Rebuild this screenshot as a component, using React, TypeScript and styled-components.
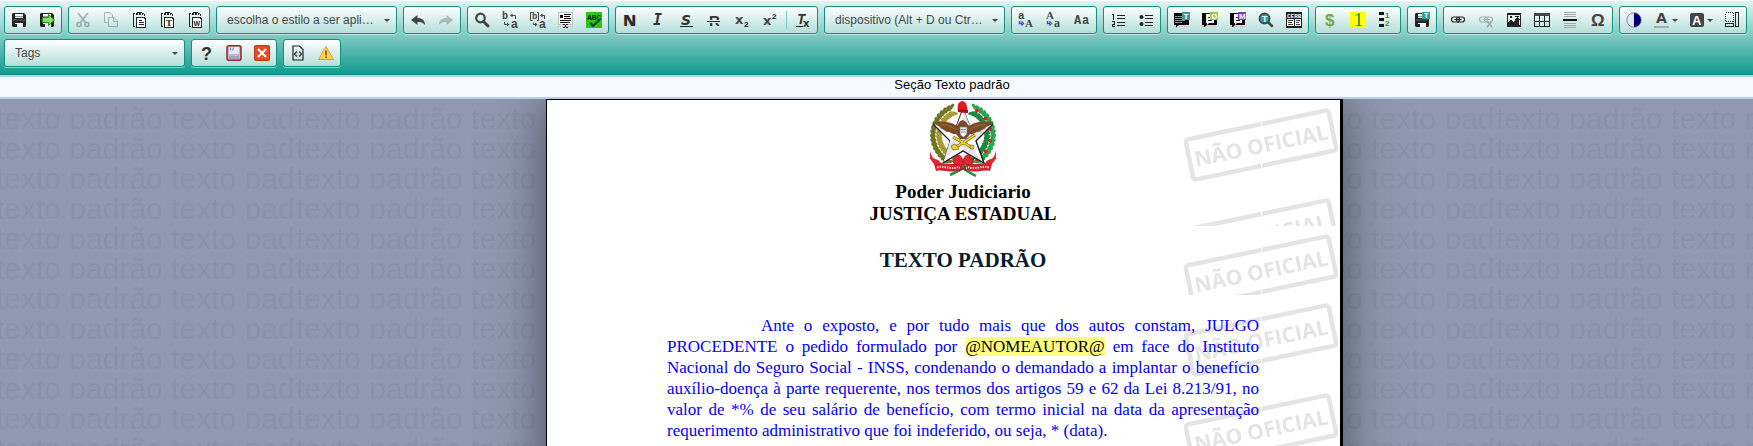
import React from 'react';
import styled, { createGlobalStyle } from 'styled-components';

const GlobalStyle = createGlobalStyle`
  * { box-sizing: border-box; }
  html, body, #root { height: 100%; margin: 0; }
  body { overflow: hidden; background: #9099af; font-family: "Liberation Sans", Arial, sans-serif; }
`;

const Editor = styled.div`
  display: flex;
  flex-direction: column;
  height: 100%;
`;

const Toolbar = styled.header`
  display: flex;
  flex-wrap: wrap;
  gap: 5px 6px;
  flex: none;
  padding: 5px 4px 7px;
  border-top: 1px solid #fff;
  border-bottom: 1px solid #0b8c80;
  background: linear-gradient(#e2f3f1, #109b8d);
`;

const Group = styled.div`
  display: flex;
  align-items: center;
  height: 28px;
  border: 1px solid #11907f;
  border-radius: 3px;
  background: linear-gradient(#fdfffe, #b5dfda);
  box-shadow: 0 1px 0 rgba(255, 255, 255, 0.5);
`;

const ToolButton = styled.button<{ $dim?: boolean }>`
  display: flex;
  align-items: center;
  gap: 2px;
  height: 26px;
  padding: 0 6px;
  border: 0;
  background: none;
  opacity: ${(p) => (p.$dim ? 0.3 : 1)};
  &:has(svg + svg) { padding-right: 5px; }
`;

const Separator = styled.span`
  width: 1px;
  height: 18px;
  margin: 0 2px;
  background: #7fc9c0;
`;

const ComboBox = styled(Group)`
  position: relative;
  width: 181px;
`;

const ComboSelect = styled.select`
  width: 100%;
  height: 26px;
  padding: 0 20px 0 10px;
  border: 0;
  appearance: none;
  background: none;
  color: #474747;
  font: 12px/26px "Liberation Sans", Arial, sans-serif;
`;

const ComboArrow = styled.span`
  position: absolute;
  right: 6px;
  top: 12px;
  display: flex;
  pointer-events: none;
`;

const SectionBar = styled.div`
  flex: none;
  height: 24px;
  padding-left: 151px;
  border: solid #b1cffa;
  border-width: 2px 0;
  background: #f6faff;
  text-align: center;
  font-size: 13px;
  line-height: 15px;
  color: #000;
`;

const Workspace = styled.main`
  position: relative;
  display: flex;
  justify-content: center;
  flex: 1;
  min-height: 0;
  padding-left: 136px;
  overflow: hidden;
  background: #9099af;
`;

const Backdrop = styled.svg`
  position: absolute;
  inset: 0;
  width: 100%;
  height: 100%;
`;

const Sheet = styled.article`
  position: relative;
  flex: none;
  width: 797px;
  min-height: 900px;
  border: solid #000;
  border-width: 1px 3px 0 1px;
  background: #fff;
  box-shadow: 0 0 50px rgba(0, 0, 0, 0.5);
  font-family: "Liberation Serif", "Times New Roman", serif;
  text-align: center;
`;

const Section = styled.section<{ $height: number }>`
  position: relative;
  min-height: ${(p) => p.$height}px;
  padding: 1px 81px 0 120px;
`;

const Content = styled.div`
  position: relative;
`;

const Crest = styled.svg`
  display: block;
  width: 70px;
  height: 77px;
  margin: 0 auto 3px;
`;

const Court = styled.p`
  margin: 0;
  font-size: 19px;
  font-weight: bold;
  line-height: 22px;
`;

const Title = styled.h1`
  margin: 0;
  padding-top: 20px;
  font-size: 21px;
  line-height: 26px;
  color: #05202a;
`;

const Paragraph = styled.p`
  margin: 0;
  padding-top: 19px;
  text-align: justify;
  text-indent: 94px;
  font-size: 17px;
  line-height: 21px;
  color: #0000ff;
`;

const Variable = styled.span`
  background: #ffff80;
  color: #000;
`;

const K = '#222';
const G = '#444';

const Icon = ({ children, crisp }: { children: React.ReactNode; crisp?: boolean }) => (
  <svg
    width="16"
    height="16"
    viewBox="0 0 16 16"
    fill="none"
    overflow="visible"
    aria-hidden="true"
    shapeRendering={crisp ? 'crispEdges' : undefined}
  >
    {children}
  </svg>
);

type GlyphProps = { x: number; y: number; s: number; c?: string; f?: string; w?: number; i?: boolean; children: React.ReactNode };
const Glyph = ({ x, y, s, c = G, f = 'Liberation Sans', w = 700, i, children }: GlyphProps) => (
  <text x={x} y={y} fontSize={s} fill={c} fontFamily={`"${f}", sans-serif`} fontWeight={w} fontStyle={i ? 'italic' : 'normal'}>
    {children}
  </text>
);

const Arrow = () => (
  <svg width="6" height="3" viewBox="0 0 6 3" aria-hidden="true">
    <path d="M0 0H6L3 3Z" fill="#474747" />
  </svg>
);

const Floppy = () => (
  <>
    <path d="M2 1H13L15 3V14L14 15H2L1 14V2Z" fill={K} />
    <path d="M4 2H12V6H4Z" fill="#eef8f6" />
    <path d="M4 4.5H12" stroke="#999" />
    <path d="M2 8H14" stroke="#777" strokeWidth=".8" />
    <path d="M4 11H12V15H4Z" fill="#eef8f6" />
    <path d="M4 12H6V15H4Z" fill={K} />
  </>
);

const Clipboard = ({ children }: { children: React.ReactNode }) => (
  <Icon crisp>
    <path d="M4 14.5H3L2.500 14V2.500L3 1.500H4M12 1.500L13.500 2.500V4" stroke={K} />
    <path d="M6 .5H11" stroke={K} />
    <path d="M5 2H12" stroke={K} strokeWidth="2" strokeDasharray="2 1" />
    <path d="M5.500 5.500H13L14.500 7V15.500H5.500Z" stroke={K} fill="#f8fffd" />
    {children}
  </Icon>
);

const ReplaceArrows = () => (
  <>
    <path d="M10 3.500H13.500V7" stroke={G} />
    <path d="M8 3.500L10.500 1.500V5.500Z" fill={G} />
    <path d="M2.500 10V12.500H5" stroke={G} />
    <path d="M7.500 12.500L5 10.500V14.500Z" fill={G} />
  </>
);

const CaseArrow = () => (
  <path d="M1.500 9V11.500H4M3.500 9.500L5.500 11.500L3.500 13.500" stroke="#2f50c8" strokeWidth="1.400" />
);

const Speech = ({ letter, color, full }: { letter: string; color: string; full?: boolean }) => (
  <Icon>
    <path d="M0 14.500H15" stroke="#e6b4cf" strokeWidth="1.500" strokeDasharray="1.500 1" />
    <path d="M0 1H15V13H5L2 15.500V13H0Z" fill="#080808" />
    {full ? (
      <path d="M1 4.500H9M1 6.500H9M1 8.500H11M1 10.500H8" stroke="#8a8a8a" />
    ) : (
      <>
        <path d="M4 2H12V11H7L5 13V11H4Z" fill="#f4faf9" />
        <path d="M6 5.500H9M6 8.500H10" stroke={K} />
      </>
    )}
    <path d="M8 0H16V8H8Z" fill={color} />
    <Glyph x={letter === 'M' ? 9 : 9.500} y={7} s={8} c="#fff">{letter}</Glyph>
  </Icon>
);

const Chain = () => (
  <>
    <rect x="1.500" y="5" width="8" height="5" rx="2.500" stroke={K} strokeWidth="1.200" />
    <rect x="6.500" y="5" width="8" height="5" rx="2.500" stroke={K} strokeWidth="1.200" />
    <path d="M4.500 7.500H11.500" stroke={K} />
  </>
);

const NumberedLines = () => <path d="M7 3.500H15M7 6.500H15M7 10.500H15M7 13.500H15" stroke={K} />;

const icons: Record<string, React.ReactNode> = {
  save: <Icon><Floppy /></Icon>,
  saveAs: (
    <Icon>
      <Floppy />
      <path d="M3.500 5.500H9.500V2.500L15.500 8L9.500 13.500V10.500H3.500Z" fill="#86e06c" stroke="#2c8a1d" />
    </Icon>
  ),
  cut: (
    <Icon>
      <path d="M3 1L11 11M13 1L5 11" stroke={K} strokeWidth="2" />
      <circle cx="4" cy="12.500" r="2" stroke={K} strokeWidth="1.600" />
      <circle cx="12" cy="12.500" r="2" stroke={K} strokeWidth="1.600" />
    </Icon>
  ),
  copy: (
    <Icon>
      <path d="M5 10.500H1.500V.5H7L9.500 3V5" stroke={K} />
      <path d="M5.500 5.500H11L14.500 9V14.500H5.500Z" stroke={K} />
      <path d="M10.500 5.500V9.500H14" stroke={K} />
    </Icon>
  ),
  paste: <Clipboard><path d="M8 8.500H11M8 10.500H13M8 12.500H13" stroke={K} /></Clipboard>,
  pasteText: <Clipboard><Glyph x={7} y={14} s={9} c={K} f="Liberation Serif">T</Glyph></Clipboard>,
  pasteWord: <Clipboard><Glyph x={6.500} y={14} s={7} c={K}>W</Glyph></Clipboard>,
  undo: <Icon><path d="M1 8L7.500 3V6C12 6 15 8.500 15 13C13 10.500 11 10 7.500 10V13Z" fill={G} /></Icon>,
  redo: <Icon><path d="M15 8L8.500 3V6C4 6 1 8.500 1 13C3 10.500 5 10 8.500 10V13Z" fill={G} /></Icon>,
  find: (
    <Icon>
      <circle cx="6.500" cy="6" r="4.300" stroke={G} strokeWidth="2.200" />
      <path d="M9.500 9.500L14 14" stroke={G} strokeWidth="3" strokeLinecap="round" />
    </Icon>
  ),
  replace: <Icon><Glyph x={0} y={7} s={10} f="Liberation Mono">b</Glyph><Glyph x={9} y={16} s={12}>a</Glyph><ReplaceArrows /></Icon>,
  replaceAll: (
    <Icon>
      <Glyph x={2} y={7} s={9} f="Liberation Mono">b</Glyph>
      <path d="M2.500 .5H.5V8.500H2.500M7 .5H8.500V8.500H7" stroke={G} />
      <path d="M12 3.500H14.500V7" stroke={G} />
      <path d="M10 3.500L12.500 1.500V5.500Z" fill={G} />
      <path d="M3.500 10.500V12.500H5" stroke={G} />
      <path d="M7.500 12.500L5 10.500V14.500Z" fill={G} />
      <Glyph x={9} y={16} s={12}>a</Glyph>
    </Icon>
  ),
  selectAll: (
    <Icon crisp>
      <path d="M0 0H15V13H0Z" fill="#c2c2c2" />
      <path d="M1 1H14V12H1Z" fill="#f1f5f4" />
      <path d="M2 3H5V6H2ZM6 2H13V3H6ZM6 4H12V5H6ZM6 6H13V7H6ZM2 8H13V9H2ZM2 10H12V11H2Z" fill="#111" />
      <path d="M0 14.500H15" stroke="#bbb" strokeDasharray="1 1" />
      <path d="M5 12.500H7M8 12.500H10M7.500 13V15M5 15.500H7M8 15.500H10" stroke="#111" />
    </Icon>
  ),
  spell: (
    <Icon>
      <path d="M0 0H16V16H0Z" fill="#2dc614" />
      <Glyph x={1} y={8} s={8} c="#061a06" f="Liberation Mono">ABC</Glyph>
      <path d="M4.500 11L7 14L13.500 8" stroke="#12384a" strokeWidth="2.200" />
    </Icon>
  ),
  bold: <Icon><Glyph x={1} y={14} s={16} c="#2b2b2b" f="Open Sans" w={800}>N</Glyph></Icon>,
  italic: <Icon><Glyph x={3} y={13} s={15} c="#333" f="DejaVu Sans Mono" i>I</Glyph></Icon>,
  underline: <Icon><Glyph x={3} y={13} s={14} c="#333" f="DejaVu Sans" i>S</Glyph><path d="M2 14.500H15" stroke={K} /></Icon>,
  strike: <Icon><Glyph x={3} y={14} s={15} c="#333">R</Glyph><path d="M1 9.500H14" stroke="#eaf6f4" strokeWidth="3" /><path d="M1 9.500H14" stroke={K} /></Icon>,
  sub: <Icon><Glyph x={1} y={12} s={13} f="DejaVu Sans">x</Glyph><Glyph x={10} y={15} s={8} c={K}>2</Glyph></Icon>,
  sup: <Icon><Glyph x={1} y={13} s={13} f="DejaVu Sans">x</Glyph><Glyph x={10} y={7} s={8} c={K}>2</Glyph></Icon>,
  removeFormat: (
    <Icon>
      <Glyph x={2} y={12} s={14} c="#333" f="Liberation Mono" i>T</Glyph>
      <path d="M1 14.500H8" stroke={K} />
      <Glyph x={8} y={15} s={10} c="#333" f="DejaVu Sans">x</Glyph>
    </Icon>
  ),
  upper: <Icon><Glyph x={0} y={7} s={11} f="Liberation Mono">a</Glyph><Glyph x={7} y={15} s={11} f="Liberation Serif">A</Glyph><CaseArrow /></Icon>,
  lower: <Icon><Glyph x={0} y={7} s={11} f="Liberation Serif">A</Glyph><Glyph x={8} y={15} s={12} f="Liberation Serif">a</Glyph><CaseArrow /></Icon>,
  capitalize: <Icon><Glyph x={0} y={12} s={12} f="Liberation Mono">A</Glyph><Glyph x={8} y={12} s={12} f="Liberation Mono">a</Glyph></Icon>,
  ordered: (
    <Icon crisp>
      <NumberedLines />
      <path d="M2 2.500H3.500V8M2 9.500H4.500V12.500H2.500V14.500H5" stroke={K} />
    </Icon>
  ),
  bullets: <Icon><NumberedLines /><circle cx="3.500" cy="5" r="2" fill={K} /><circle cx="3.500" cy="12" r="2" fill={K} /></Icon>,
  noteT: <Speech letter="T" color="#2e9fa6" full />,
  noteD: <Speech letter="D" color="#9ccb34" />,
  noteM: <Speech letter="M" color="#8438cf" />,
  findT: (
    <Icon>
      <path d="M10 10L14 14" stroke={G} strokeWidth="2.500" strokeLinecap="round" />
      <circle cx="6.500" cy="6.500" r="5" fill="#2e9fa6" stroke={G} strokeWidth="1.800" />
      <Glyph x={4} y={10} s={9} c="#d8ffff">T</Glyph>
    </Icon>
  ),
  cerb: (
    <Icon crisp>
      <path d="M0 0H16V15.500H0Z" fill="#1c1c1c" />
      <Glyph x={1} y={6} s={6} c="#fff" f="Liberation Mono">CERB</Glyph>
      <path d="M1 7H8V14H1ZM9 7H15V14H9Z" fill="#f3faf9" />
      <path d="M2 8.500H7M2 10.500H6M2 12.500H7M10 8.500H14M10 10.500H13M10 12.500H14" stroke="#444" />
    </Icon>
  ),
  money: <Icon><Glyph x={3} y={14} s={17} c="#7ba443">$</Glyph></Icon>,
  number: <Icon><path d="M0 0H16V16H0Z" fill="#ff0" /><Glyph x={4} y={14} s={18} c="#168a16" f="Liberation Serif" w={400}>1</Glyph></Icon>,
  levels: (
    <Icon>
      <path d="M1 0H6V3H1ZM1 6H6V9H1ZM1 12H6V15H1Z" fill="#111" />
      <Glyph x={7} y={6} s={8} c="#3b8f1a">1</Glyph>
      <Glyph x={7} y={14} s={8} c="#3b8f1a">2</Glyph>
    </Icon>
  ),
  saveT: (
    <Icon>
      <Floppy />
      <path d="M8 0H16V7H8Z" fill="#2e9fa6" />
      <Glyph x={10} y={6} s={7} c="#fff">T</Glyph>
    </Icon>
  ),
  link: <Icon><Chain /></Icon>,
  unlink: <Icon><Chain /><path d="M9 9L14 15M14 9L9 15" stroke={K} strokeWidth="1.500" /></Icon>,
  image: (
    <Icon crisp>
      <path d="M1 1H15V15H1Z" fill={K} />
      <path d="M2 3H14V13H2Z" fill="#e2efed" />
      <path d="M2 13V10L5 8L8 10L9 8H8L11 5L14 8H13V13Z" fill={K} />
      <path d="M4 4H6V6H4ZM9 4H13V5H9Z" fill={K} />
    </Icon>
  ),
  table: (
    <Icon crisp>
      <path d="M0 1H16V4H0Z" fill={G} />
      <path d="M.5 4V14.500H15.500V4M.5 9.500H15.500M5.500 4V14M10.500 4V14" stroke={K} />
    </Icon>
  ),
  rule: (
    <Icon crisp>
      <path d="M2 .5H14M2 2.500H14M2 4.500H14M2 11.500H14M2 13.500H14M2 15.500H14" stroke="#9aa8a6" />
      <path d="M1 7H15V9H1Z" fill="#111" />
    </Icon>
  ),
  omega: <Icon><Glyph x={1} y={14} s={17} f="Liberation Sans">Ω</Glyph></Icon>,
  contrast: (
    <Icon>
      <circle cx="8" cy="8" r="7.200" fill="#e4e4ec" stroke="#8c8ca0" />
      <path d="M8 1A7 7 0 0 1 8 15Z" fill="#00007c" />
    </Icon>
  ),
  textColor: <Icon><Glyph x={2} y={11} s={14} f="DejaVu Sans">A</Glyph><path d="M0 15H15" stroke="#9aa09f" strokeWidth="1.600" /></Icon>,
  bgColor: (
    <Icon>
      <rect x="1" y="1" width="14" height="14" rx="2" fill={G} />
      <Glyph x={3} y={13} s={13} c="#fff">A</Glyph>
    </Icon>
  ),
  blocks: (
    <Icon crisp>
      <path d="M1.500 .5H9.500V9.500H1.500Z" stroke={K} strokeDasharray="1 1" />
      <rect x="1.500" y="11.500" width="8" height="3" rx="1" stroke={K} />
      <rect x="11.500" y=".5" width="3" height="14" rx="1" stroke={K} />
    </Icon>
  ),
  about: <Icon><Glyph x={3} y={15} s={18} c="#333">?</Glyph></Icon>,
  autosave: (
    <Icon>
      <rect x="1" y=".8" width="14" height="14.400" rx="2" fill="#b9bcd2" stroke="#a1272f" strokeWidth="1.600" />
      <path d="M3 2H13V9H3Z" fill="#e8eaf4" />
      <path d="M4.500 2.500V5.500M6.500 5.500L7.500 2.500" stroke="#7274a6" />
      <path d="M3 11H13V14H3Z" fill="#a3a6c2" />
    </Icon>
  ),
  close: (
    <Icon>
      <rect x=".5" y=".5" width="15" height="15" rx="1.500" fill="#ea4a23" stroke="#c33413" />
      <path d="M4 4L12 12M12 4L4 12" stroke="#fff" strokeWidth="2" />
    </Icon>
  ),
  source: (
    <Icon>
      <path d="M3 1H9.500L13 4.500V15H3Z" stroke={K} strokeWidth="1.200" />
      <path d="M7 6.500L4.500 9L7 11.500M9 6.500L11.500 9L9 11.500" stroke={G} strokeWidth="1.600" />
    </Icon>
  ),
  warning: (
    <Icon>
      <path d="M8 1.500L15.500 14.500H.5Z" fill="#fbd34f" stroke="#dca02c" strokeLinejoin="round" />
      <path d="M8 5.500V10.500M8 11.500V13" stroke="#8a4c0a" strokeWidth="1.600" />
    </Icon>
  ),
};

type Item = { icon: string; label: string; dim?: boolean; menu?: boolean; sepBefore?: boolean };
type Entry = Item[] | { combo: string; label: string };
const t = (icon: string, label: string, extra: Partial<Item> = {}): Item => ({ icon, label, ...extra });

const entries: Entry[] = [
  [t('save', 'Salvar'), t('saveAs', 'Salvar e fechar')],
  [
    t('cut', 'Recortar', { dim: true }), t('copy', 'Copiar', { dim: true }), t('paste', 'Colar'),
    t('pasteText', 'Colar como texto'), t('pasteWord', 'Colar do Word'),
  ],
  { combo: 'escolha o estilo a ser apli…', label: 'Estilo' },
  [t('undo', 'Desfazer'), t('redo', 'Refazer', { dim: true })],
  [
    t('find', 'Localizar'), t('replace', 'Substituir'), t('replaceAll', 'Substituir tudo'),
    t('selectAll', 'Selecionar tudo'), t('spell', 'Verificar ortografia'),
  ],
  [
    t('bold', 'Negrito'), t('italic', 'Itálico'), t('underline', 'Sublinhado'), t('strike', 'Tachado'),
    t('sub', 'Subscrito'), t('sup', 'Sobrescrito'), t('removeFormat', 'Remover formatação', { sepBefore: true }),
  ],
  { combo: 'dispositivo (Alt + D ou Ctr…', label: 'Dispositivo' },
  [t('upper', 'Maiúsculas'), t('lower', 'Minúsculas'), t('capitalize', 'Capitalizar')],
  [t('ordered', 'Lista numerada'), t('bullets', 'Lista')],
  [
    t('noteT', 'Texto padrão'), t('noteD', 'Documento'), t('noteM', 'Modelo'),
    t('findT', 'Localizar texto padrão'), t('cerb', 'Cabeçalho'),
  ],
  [t('money', 'Valor por extenso'), t('number', 'Número por extenso'), t('levels', 'Numeração')],
  [t('saveT', 'Salvar texto padrão')],
  [
    t('link', 'Link'), t('unlink', 'Remover link', { dim: true }), t('image', 'Imagem'),
    t('table', 'Tabela'), t('rule', 'Linha horizontal'), t('omega', 'Caractere especial'),
  ],
  [
    t('contrast', 'Contraste'), t('textColor', 'Cor do texto', { menu: true }),
    t('bgColor', 'Cor de fundo', { menu: true }), t('blocks', 'Mostrar blocos'),
  ],
  { combo: 'Tags', label: 'Tags' },
  [t('about', 'Ajuda'), t('autosave', 'Salvamento automático'), t('close', 'Fechar')],
  [t('source', 'Código-fonte'), t('warning', 'Avisos')],
];

const Combo = ({ text, label }: { text: string; label: string }) => (
  <ComboBox>
    <ComboSelect aria-label={label} defaultValue={text}>
      <option>{text}</option>
    </ComboSelect>
    <ComboArrow><Arrow /></ComboArrow>
  </ComboBox>
);

const Stamps = ({ id }: { id: string }) => (
  <Backdrop aria-hidden="true">
    <defs>
      <pattern id={id} width="160" height="90" patternUnits="userSpaceOnUse">
        <g transform="translate(81 45) rotate(-11.800)">
          <rect x="-73" y="-20.500" width="146" height="41" rx="3" fill="none" stroke="#e4e4e4" strokeWidth="4.500" />
          <text y="8" textAnchor="middle" fontFamily='"Open Sans", sans-serif' fontWeight="700" fontSize="21" fill="#e4e4e4">
            NÃO OFICIAL
          </text>
        </g>
        <path d="M81.500 14V28M81.500 60V74" stroke="#fff" />
      </pattern>
    </defs>
    <svg x="100%" overflow="visible">
      <rect x="-160" width="160" height="100%" fill={`url(#${id})`} />
    </svg>
  </Backdrop>
);

const Wreath = ({ right }: { right?: boolean }) => {
  const dark = right ? '#1c8a3a' : '#6f7620';
  const light = right ? '#2fa350' : '#ab9a35';
  const leaves: React.ReactNode[] = [];
  for (let n = 0; n < 17; n += 1) {
    const angle = 112 + n * 8;
    const a = (angle * Math.PI) / 180;
    const x = 35 + 27 * Math.cos(a) * (right ? -1 : 1);
    const y = 34 - 27 * Math.sin(a);
    // Each pair of leaves opens upward along the branch.
    const turn = right ? angle - 180 : 180 - angle;
    leaves.push(
      <g key={n} transform={`translate(${x} ${y}) rotate(${turn})`}>
        <ellipse cx="-3" cy="-1" rx="1.700" ry="4.600" fill={dark} transform="rotate(-32)" />
        <ellipse cx="3" cy="-1" rx="1.700" ry="4.600" fill={light} transform="rotate(32)" />
        {right && n % 3 === 1 && <circle cx="1" r="1.800" fill="#d8202a" />}
      </g>,
    );
  }
  return <>{leaves}</>;
};

const CoatOfArms = () => (
  <Crest viewBox="0 0 70 77" role="img" aria-label="Brasão do Estado de Santa Catarina">
    <Wreath />
    <Wreath right />
    <path d="M22 74C29 71 38 66 46 60M48 75C42 72 34 67 26 60" stroke="#2b8a45" strokeWidth="2.500" fill="none" />
    <path d="M35 7L42.500 27L65 23L48 40L56 62L35 50L15 62L22 40L5 23L27.500 27Z" fill="#fff" stroke="#333" strokeWidth="1" />
    <path d="M35 7L42.500 27L35 36ZM65 23L48 40L35 36ZM56 62L35 50V36ZM15 62L22 40L35 36ZM5 23L27.500 27L35 36Z" fill="#e6e6e6" />
    <path d="M65 23L48 40L56 62L35 50L15 62M22 40L5 23" stroke="#222" strokeWidth="1.300" fill="none" />
    <path d="M30 11C29 4 30 1 34 0C38 0 39 4 40 12Z" fill="#e21b24" />
    <path d="M30 11L40 12V9L30 8Z" fill="#a80f18" />
    <path d="M6 21C14 20 22 20 29 25L32 20L35 19L38 21L41 25C48 20 56 20 65 21C61 23 62 25 58 26C57 29 53 28 52 31C48 30 46 34 42 33L38 38H32L28 33C24 34 22 30 18 31C17 28 13 29 12 26C9 25 9 23 6 21Z" fill="#7b4a26" />
    <path d="M12 24C18 23 23 25 28 29M58 24C52 23 47 25 42 29" stroke="#a06a3e" fill="none" />
    <path d="M32 26H39V31C39 34 37 35 35.500 36C33 35 32 34 32 31Z" fill="#f3f3f6" stroke="#777" strokeWidth=".7" />
    <path d="M33 28.500H38M33 31H38" stroke="#8994a8" />
    <path d="M25 36L45 47M47 34L25 48" stroke="#6e5b08" strokeWidth="3" />
    <path d="M25 36L45 47M47 34L25 48" stroke="#f1d52c" strokeWidth="1.800" />
    <path d="M23 45L27 43L31 48L25 49Z" fill="#f1d52c" stroke="#6e5b08" strokeWidth=".7" />
    <circle cx="44" cy="46" r="2" fill="#f1d52c" stroke="#6e5b08" strokeWidth=".7" />
    <path d="M2 50C4 58 8 61 16 63L10 66C5 62 1 60 2 50ZM68 50C66 58 62 61 54 63L60 66C65 62 69 60 68 50Z" fill="#e32632" />
    <path d="M2 57C7 60 9 58 12 62M68 57C63 60 61 58 58 62" stroke="#e32632" strokeWidth="2" fill="none" />
    <path d="M6 63C14 60 22 65 31 62L31 69C22 73 16 68 8 70ZM64 63C56 60 48 65 39 62L39 69C48 73 54 68 62 70Z" fill="#d4212e" />
    <path d="M9 66.500C16 64 22 69 30 66M61 66.500C54 64 48 69 40 66" stroke="#f6c9cb" strokeWidth="2" strokeDasharray="1.500 1" fill="none" />
    <path d="M34 63C26 66 23 61 27 56C31 51 35 56 35 62C35 56 39 51 43 56C47 61 44 66 36 63L38 70L35 67L31 70Z" fill="#e32632" stroke="#8f0f18" strokeWidth=".7" />
  </Crest>
);

export default function App() {
  return (
    <>
      <GlobalStyle />
      <Editor>
        <Toolbar role="toolbar" aria-label="Editor">
          {entries.map((entry, index) =>
            Array.isArray(entry) ? (
              <Group key={index} role="group">
                {entry.map((item) => (
                  <React.Fragment key={item.icon}>
                    {item.sepBefore && <Separator />}
                    <ToolButton type="button" aria-label={item.label} $dim={item.dim} disabled={item.dim}>
                      {icons[item.icon]}
                      {item.menu && <Arrow />}
                    </ToolButton>
                  </React.Fragment>
                ))}
              </Group>
            ) : (
              <Combo key={index} text={entry.combo} label={entry.label} />
            ),
          )}
        </Toolbar>
        <SectionBar>Seção Texto padrão</SectionBar>
        <Workspace>
          <Backdrop aria-hidden="true">
            <defs>
              <pattern id="wallpaper" x="-7" width="300" height="30" patternUnits="userSpaceOnUse">
                <text x="3" y="30" fontFamily='"Liberation Sans", Arial, sans-serif' fontSize="30" fill="#8a92a7">
                  texto padrão texto pad
                </text>
              </pattern>
            </defs>
            <rect width="100%" height="100%" fill="url(#wallpaper)" />
          </Backdrop>
          <Sheet>
            <Section $height={126}>
              <Stamps id="stamps-header" />
              <Content>
                <CoatOfArms />
                <Court>Poder Judiciario</Court>
                <Court>JUSTIÇA ESTADUAL</Court>
              </Content>
            </Section>
            <Section $height={69}>
              <Stamps id="stamps-title" />
              <Content>
                <Title>TEXTO PADRÃO</Title>
              </Content>
            </Section>
            <Section $height={600}>
              <Stamps id="stamps-body" />
              <Content>
                <Paragraph>
                  Ante o exposto, e por tudo mais que dos autos constam, JULGO PROCEDENTE o pedido formulado por{' '}
                  <Variable>@NOMEAUTOR@</Variable> em face do Instituto Nacional do Seguro Social - INSS, condenando o
                  demandado a implantar o benefício auxílio-doença à parte requerente, nos termos dos artigos 59 e 62 da
                  Lei 8.213/91, no valor de *% de seu salário de benefício, com termo inicial na data da apresentação
                  requerimento administrativo que foi indeferido, ou seja, * (data).
                </Paragraph>
              </Content>
            </Section>
          </Sheet>
        </Workspace>
      </Editor>
    </>
  );
}
